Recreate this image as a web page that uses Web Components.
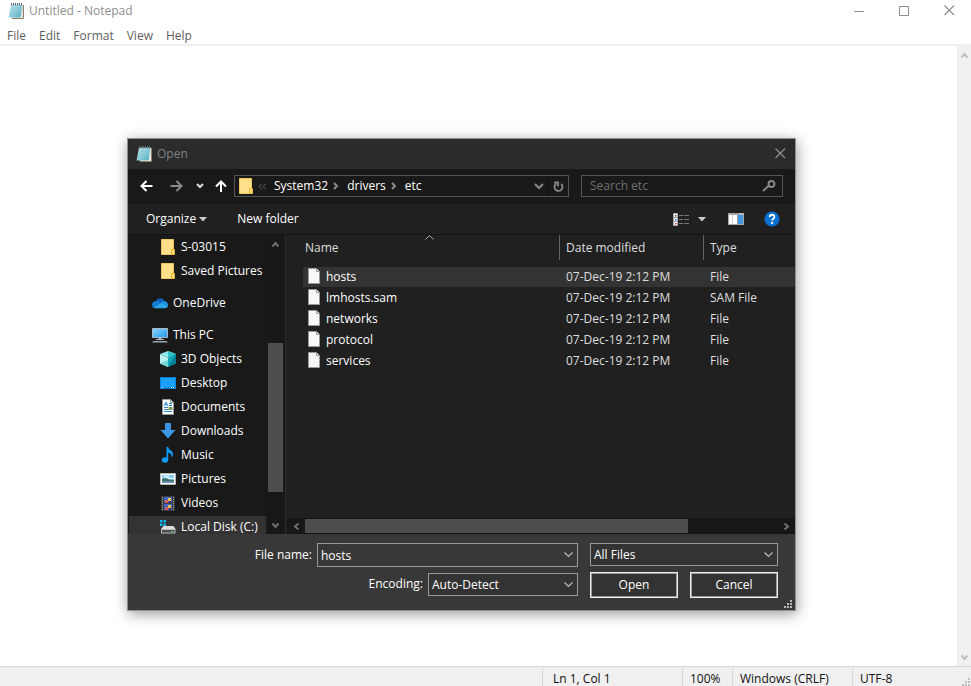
<!DOCTYPE html>
<html lang="en">
<head>
<meta charset="utf-8">
<title>Untitled - Notepad</title>
<style>
html,body{height:100%;margin:0}
body{font:12px/16px "Open Sans","Noto Sans",sans-serif;background:#fff;overflow:hidden}
</style>
</head>
<body>
<notepad-window></notepad-window>
<open-dialog></open-dialog>
<script>
const define=(name,html,setup)=>{
  const t=document.createElement('template');
  t.innerHTML='<style>*{box-sizing:border-box}button,input,select{font:inherit;color:inherit;margin:0;padding:0;border:0;background:none;border-radius:0;outline:0}a{color:inherit;text-decoration:none}</style>'+html;
  customElements.define(name,class extends HTMLElement{
    constructor(){super();this.attachShadow({mode:'open'}).append(t.content.cloneNode(true));}
    connectedCallback(){if(setup)setup(this,this.shadowRoot);}
  });
};

const line=(d,w,h,s=1,x='')=>`<svg width="${w}" height="${h}" viewBox="0 0 ${w} ${h}" fill="none" stroke="currentColor" stroke-width="${s}" ${x}><path d="${d}"/></svg>`;
const svg=(w,h,b)=>`<svg width="${w}" height="${h}" viewBox="0 0 ${w} ${h}">${b}</svg>`;
const ICONS={
  notepad:svg(16,16,`<defs><linearGradient id="n" x1="0" y1="0" x2="1" y2="1"><stop offset="0" stop-color="#c5e8ef"/><stop offset=".5" stop-color="#8fcfdd"/><stop offset="1" stop-color="#4fa9bd"/></linearGradient></defs><path d="M4 2h11.5v13.5H4z" fill="#e9e4d6"/><path d="M15.500 2v13.500H4" fill="none" stroke="#8c7f68"/><path d="M3 1.500h11.500L12.500 14.500H.5z" fill="url(#n)"/><path d="M3 5h10M2.500 7.500h10M2 10h10" stroke="#7dbccb" stroke-width=".6"/><path d="M3 14.500h10l1.500-9v9.500z" fill="#d9ecef"/><path d="M3.500 0v2.500M5.500 0v2.500M7.500 0v2.500M9.500 0v2.500M11.500 0v2.500M13.500 0v2.500" stroke="#57696e"/>`),
  min:line('M0 5.500h10',10,10),
  max:line('M.5 .5h9v9h-9z',10,10),
  close:line('M.5 .5l9.500 9.500M10 .5L.5 10',11,11,1.2),
  back:line('M12.500 6H1.500M6.500 1L1.500 6l5 5',13,12,2),
  forward:line('M.5 6h11M6.500 1l5 5-5 5',13,12,2),
  up:line('M6 12V1.500M1 6.500l5-5 5 5',12,12,2),
  small:line('M1 1l3 3 3-3',8,6,2),
  crumb:line('M1 1l3 3-3 3',6,8,2),
  crumbs:line('M4 .5L1 3.500l3 3M8 .5L5 3.500l3 3',9,7),
  drop:line('M1 1l4 4 4-4',10,7,2),
  combo:line('M.5 .5l4 4 4-4',9,6,1.2),
  sort:line('M.5 4.500l4-4 4 4',9,5),
  sup:line('M.5 5.500l3-3.500 3 3.500',7,7,2),
  sdown:line('M.5 1.500l3 3.500 3-3.500',7,7,2),
  sleft:line('M5.500 .5L2 3.500l3.500 3',7,7,2),
  sright:line('M1.500 .5L5 3.500l-3.500 3',7,7,2),
  refresh:line('M8.200 3A4 4 0 1 1 3 2.800M1.200 1.500H5V5.500',11,11,1.8),
  search:line('M7 5.500L1 11M6.500 4a3 3 0 1 0 6 0a3 3 0 1 0-6 0',12,12,2,'overflow="visible"'),
  tri:svg(8,5,`<path d="M0 0h8L4 4.500z" fill="#ccc"/>`),
  view:svg(16,13,`<path d="M.5 .5h4v12h-4z" fill="#fff" stroke="#aaa"/><path d="M.5 4.500h4M.5 8.500h4" stroke="#999"/><path d="M2 2h1.500v1.500H2z" fill="#555"/><path d="M2 6h1.500v1.500H2z" fill="#37d"/><path d="M2 10h1.500v1.500H2z" fill="#d23"/><path d="M6 2.500h4m1 0h5M6 6.500h4m1 0h5M6 10.500h4m1 0h5" stroke="#7a7a7a"/>`),
  pane:svg(16,12,`<path d="M0 0h16v12H0z" fill="#a6a6a6"/><path d="M1 2h8v9H1z" fill="#fff"/><path d="M4.500 2v9" stroke="#d0d0d0"/><path d="M10 2h5v9h-5z" fill="#3f9ae5"/><path d="M12 1h1m1 0h1" stroke="#fff"/>`),
  help:svg(16,16,`<circle cx="8" cy="8" r="7.600" fill="#0a6fd2"/><path d="M5.600 6.100C5.700 2.900 10.500 3 10.400 6c0 1.700-2.300 1.800-2.300 3.600" fill="none" stroke="#fff" stroke-width="1.800"/><path d="M7.100 10.900h2v2h-2z" fill="#fff"/>`),
  folder:svg(14,16,`<path d="M.5 .5h12v15H.5z" fill="#ffe08a" stroke="#eec75a"/><path d="M10.500 10.500h3v5h-3z" fill="#ffdb70" stroke="#e5b73f"/>`),
  cloud:svg(16,16,`<path d="M4 6a4.500 4.500 0 0 1 8-.5L14 8H3z" fill="#0b64b8"/><path d="M3.500 6.200C1.500 6.200 0 7.800 0 9.800c0 1 .5 2 1.200 2.600L9 8 6.500 6.600a4 4 0 0 0-3-.4z" fill="#1080d8"/><path d="M8 8.200l3-1.800c3-.5 5 1.200 5 3.400l-.3 1.600z" fill="#1a93e0"/><path d="M1.200 12.400C2 13 3 13.200 3.600 13.200h9c1.800 0 3-.8 3.200-2L9 8z" fill="#2aa7ec"/>`),
  pc:svg(16,16,`<defs><linearGradient id="p" x1="0" y1="0" x2="1" y2="1"><stop offset="0" stop-color="#8ed6ff"/><stop offset="1" stop-color="#1c97ee"/></linearGradient></defs><path d="M.5 1.500h15v9H.5z" fill="url(#p)" stroke="#a9bac6"/><path d="M6.500 11h3v1.500h-3z" fill="#9fb0bb"/><path d="M4 12.500h8" stroke="#b7c3cb"/><path d="M1.500 14h13l1.500 1.500H0z" fill="#9aa7b0"/>`),
  cube:svg(16,16,`<path d="M8 0l8 3-8 4-8-4z" fill="#8ee8ee"/><path d="M0 3l8 4v9l-8-3.500z" fill="#b8f1ef"/><path d="M8 7l8-4v9.500L8 16z" fill="#12a8b8"/><path d="M8 0l8 3-8 4z" fill="#35bfcb"/><path d="M0 12.500L8 9v7z" fill="#72d5d8"/><path d="M8 16l8-13v9.500z" fill="#087f95"/>`),
  desktop:svg(16,16,`<path d="M0 2h16v12H0z" fill="#0a84d8"/><path d="M1 3h14v9H1z" fill="#18a0fb"/><path d="M2 12.500h1m8 0h1m1 0h1" stroke="#fff"/>`),
  doc:svg(16,16,`<path d="M2.500 .5h8l3 3v12h-11z" fill="#fff" stroke="#9a9a9a"/><path d="M10.500 .5v3h3" fill="none" stroke="#9a9a9a"/><path d="M4 7l2-4 2 4M5 5.500h2M9 4.500h3M9 6.500h3M4 8.500h4M4 10.500h8M4 12.500h8" fill="none" stroke="#2a8ad4"/><path d="M8.500 8h4v3h-4z" fill="#7fa25f"/>`),
  down:svg(16,16,`<path d="M5 0h6v7h4.500L8 15.500 .5 7H5z" fill="#3b97e6"/>`),
  music:svg(16,16,`<ellipse cx="5" cy="13" rx="3.200" ry="2.700" fill="#0c9cf5"/><path d="M6.500 0h1.700c.3 3.200 4.800 3.500 4.800 7 0 1.600-.6 2.600-1.500 3.500C12 7.500 10 6 8.200 5.500V13H6.500z" fill="#0c9cf5"/>`),
  pics:svg(16,16,`<path d="M.5 2.500h15v11H.5z" fill="#fff" stroke="#b5b5b5"/><path d="M2 4h12v8H2z" fill="#8ecdf3"/><path d="M4 5h5v1.500H4zM8 7h6v1H8z" fill="#e8f6ff"/><path d="M2 8c3-2 5 1 12 1v1H2z" fill="#3d6d63"/><path d="M2 10h12v2H2z" fill="#5f8fb0"/>`),
  film:svg(16,16,`<path d="M1 1h14v15H1z" fill="#3b3b3b"/><path d="M2.500 2v14M13.500 2v14" stroke="#a0a0a0" stroke-dasharray="1 1"/><path d="M4 2h8v6H4zM4 9h8v6H4z" fill="#3f66c8"/><path d="M5 5h3v3H5zM5 12h3v3H5z" fill="#d8574e"/><path d="M8 3h3v3H8zM8 10h3v3H8z" fill="#e8c045"/><path d="M9 6h2v2H9zM9 13h2v2H9z" fill="#45255f"/>`),
  disk:svg(16,16,`<path d="M0 1h2.500v2.500H0zM3.500 1H6v2.500H3.500zM0 4.500h2.500V7H0zM3.500 4.500H6V7H3.500z" fill="#12b5ec"/><path d="M3.500 7h10L15.500 10H1z" fill="#dcdcdc"/><path d="M1 10h14.500v4.500H1z" fill="#b9bdc0"/><path d="M2 11h12.500v2.500H2z" fill="#4a4d50"/><path d="M11 12.500h2" stroke="#3be04b"/>`),
  file:svg(12,16,`<path d="M.5 .5h8l3 3v12H.5z" fill="#f7f7f7" stroke="#999"/><path d="M8.500 .5v3h3" fill="#ddd" stroke="#999"/>`),
  grip:svg(9,9,`<path d="M6 0h2v2H6zM3 3h2v2H3zM6 3h2v2H6zM0 6h2v2H0zM3 6h2v2H3zM6 6h2v2H6z" fill="currentColor"/>`)
};
define('ui-icon','<style>:host{display:inline-flex;flex:none;align-items:center;justify-content:center}svg{display:block}</style><span></span>',(h,r)=>{r.querySelector('span').innerHTML=ICONS[h.getAttribute('name')];});

/* Scroll bar: the thumb's place and length come from --start and --size. */
define('scroll-bar',`<style>
:host{display:flex;flex-direction:column;background:var(--track);color:var(--arrow);min-width:0;min-height:0}
:host([horizontal]){flex-direction:row}
button{display:flex;align-items:center;justify-content:center;flex:none;width:100%;height:18px}
:host([horizontal]) button{width:18px;height:100%}
.track{flex:1;display:flex;flex-direction:inherit}
.before{flex:0 0 var(--start,0%)}.thumb{flex:0 0 var(--size,0%);background:#4d4d4d}
:host([horizontal]) .track{padding:1px 0}
</style><button aria-label="Scroll back"><ui-icon></ui-icon></button><div class="track"><div class="before"></div><div class="thumb"></div></div><button aria-label="Scroll on"><ui-icon></ui-icon></button>`,(h,r)=>{
  const n=h.hasAttribute('horizontal')?['sleft','sright']:['sup','sdown'];
  r.querySelectorAll('ui-icon').forEach((i,k)=>{i.setAttribute('name',n[k]);i.shadowRoot.querySelector('span').innerHTML=ICONS[n[k]];});
});

define('app-title',`<style>
:host{display:flex;align-items:center;color:#8f8f8f}
.t{flex:1;padding-left:5px}
</style><ui-icon name="notepad"></ui-icon><span class="t"><slot></slot></span><slot name="buttons"></slot>`);

define('notepad-window',`<style>
:host{display:flex;flex-direction:column;height:100vh}
app-title{height:22px;padding:0 16px 1px 8px}
.b{display:flex;gap:35px}.b button{display:flex;color:#8f8f8f}
nav{display:flex;gap:13px;padding:6px 7px 0;height:22px;color:#606060}
.main{flex:1;display:flex;border-top:2px solid #f0f0f0;min-height:0}
textarea{flex:1;border:0;resize:none;outline:0;padding:4px;font:inherit}
scroll-bar{width:14px;--track:#f0f0f0;--arrow:#bdbdbd}
footer{display:grid;grid-template-columns:1fr 140px 50px 120px 119px;height:20px;background:#f0f0f0;border-top:1px solid #d7d7d7;color:#111;position:relative}
footer span{margin-top:1px;border-left:1px solid #d7d7d7;padding:3px 0 0 7px;white-space:nowrap}
footer span:first-child{border:0}footer span:nth-child(2){padding-left:10px}
footer ui-icon{position:absolute;right:0;bottom:-1px;color:#bdbdbd}
</style>
<app-title>Untitled - Notepad<div class="b" slot="buttons"><button aria-label="Minimize"><ui-icon name="min"></ui-icon></button><button aria-label="Maximize"><ui-icon name="max"></ui-icon></button><button aria-label="Close"><ui-icon name="close"></ui-icon></button></div></app-title>
<nav><a href="#">File</a><a href="#">Edit</a><a href="#">Format</a><a href="#">View</a><a href="#">Help</a></nav>
<div class="main"><textarea aria-label="Text editor"></textarea><scroll-bar></scroll-bar></div>
<footer><span></span><span>Ln 1, Col 1</span><span>100%</span><span>Windows (CRLF)</span><span>UTF-8</span><ui-icon name="grip"></ui-icon></footer>`);

define('address-row',`<style>
:host{display:flex;align-items:center;height:35px;background:#191919;padding:0 12px 1px;color:#fff}
button{display:flex;flex:none;justify-content:center;align-items:center}
.go{display:flex;align-items:center;width:94px}
.go button:nth-child(1){width:13px}.go button:nth-child(2){width:13px;margin-left:17px;color:#8a8a8a}
.go button:nth-child(3){margin-left:13px;width:8px;color:#ddd}.go button:nth-child(4){margin-left:10px;width:14px}
.box{height:22px;border:1px solid #555;display:flex;align-items:center;color:#8a8a8a}
.path{flex:1 1 335px;padding-left:4px;min-width:0}
.path a{color:#fff}.path .first{margin:0 7px 0 5px;color:#666}.path a+ui-icon{margin:0 8px 0 5px}
.path .dd{margin-left:auto;width:18px}.path .re{width:20px;height:20px;border-left:1px solid #111}
.search{flex:0 1 202px;margin-left:12px;padding:0 8px}
input{flex:1;min-width:0;color:#fff}input::placeholder{color:#707070;opacity:1}
</style>
<div class="go"><button aria-label="Back"><ui-icon name="back"></ui-icon></button><button aria-label="Forward"><ui-icon name="forward"></ui-icon></button><button aria-label="Recent"><ui-icon name="small"></ui-icon></button><button aria-label="Up"><ui-icon name="up"></ui-icon></button></div>
<div class="box path"><ui-icon name="folder"></ui-icon><ui-icon class="first" name="crumbs"></ui-icon><a href="#">System32</a><ui-icon name="crumb"></ui-icon><a href="#">drivers</a><ui-icon name="crumb"></ui-icon><a href="#">etc</a><button class="dd" aria-label="Previous locations"><ui-icon name="drop"></ui-icon></button><button class="re" aria-label="Refresh"><ui-icon name="refresh"></ui-icon></button></div>
<div class="box search"><input type="search" placeholder="Search etc" aria-label="Search etc"><ui-icon name="search"></ui-icon></div>`);

define('tool-row',`<style>
:host{display:flex;align-items:center;height:31px;background:#202020;border-bottom:1px solid #141414;color:#fff;padding:0 15px 0 18px}
button{display:flex;align-items:center;gap:3px}
.new{margin:0 auto 0 30px}.view{gap:9px;margin-right:22px}.pane{margin-right:20px}
</style><button>Organize<ui-icon name="tri"></ui-icon></button><button class="new">New folder</button><button class="view" aria-label="Change view"><ui-icon name="view"></ui-icon><ui-icon name="tri"></ui-icon></button><button class="pane" aria-label="Preview pane"><ui-icon name="pane"></ui-icon></button><button aria-label="Help"><ui-icon name="help"></ui-icon></button>`);

define('tree-item',`<style>
:host{display:block}
:host([gap]){margin-top:8px}
a{display:flex;align-items:center;gap:5px;height:24px;padding-left:23px;white-space:nowrap}
:host([deep]) a{padding-left:31px}
:host([current]) a{background:#333;margin-top:1px;height:22px}
ui-icon{width:16px}
</style><a href="#"><ui-icon></ui-icon><slot></slot></a>`,(h,r)=>{r.querySelector('ui-icon').shadowRoot.querySelector('span').innerHTML=ICONS[h.getAttribute('icon')];r.querySelector('ui-icon').setAttribute('name',h.getAttribute('icon'));});

define('folder-tree',`<style>
:host{display:flex;width:158px;flex:none;background:#191919;color:#fff;overflow:hidden;border-right:1px solid #2b2b2b;padding:0 2px 0 1px}
nav{flex:1;overflow:hidden;min-width:0}
scroll-bar{width:15px;margin-left:2px;--track:#171717;--arrow:#707070;--start:34.2%;--size:56.6%}
</style><nav aria-label="Folders">
<tree-item deep icon="folder">S-03015</tree-item><tree-item deep icon="folder">Saved Pictures</tree-item>
<tree-item gap icon="cloud">OneDrive</tree-item><tree-item gap icon="pc">This PC</tree-item>
<tree-item deep icon="cube">3D Objects</tree-item><tree-item deep icon="desktop">Desktop</tree-item><tree-item deep icon="doc">Documents</tree-item><tree-item deep icon="down">Downloads</tree-item><tree-item deep icon="music">Music</tree-item><tree-item deep icon="pics">Pictures</tree-item><tree-item deep icon="film">Videos</tree-item><tree-item deep current icon="disk">Local Disk (C:)</tree-item>
</nav><scroll-bar></scroll-bar>`);

define('file-list',`<style>
:host{display:flex;flex-direction:column;flex:1;min-width:0;background:#202020;color:#fff;position:relative}
.w{flex:1;min-height:0;overflow:hidden;padding-left:17px}
table{width:100%;table-layout:fixed;border-collapse:separate;border-spacing:0}
th{font-weight:400;text-align:left;height:25px;padding:0 0 0 6px;border-left:1px solid #636363;color:#dedede}
th:first-child{border:0;padding-left:2px}
.d{width:144px}.t{width:92px}
tbody::before{content:"";display:block;height:7px}
td{height:21px;padding:0 0 0 7px;border-bottom:1px solid transparent;background-clip:padding-box;color:#dedede;white-space:nowrap}
td:first-child{padding-left:5px;color:#fff}
td:first-child>span{display:flex;align-items:center;gap:6px;height:20px}
td ui-icon{height:18px;align-items:flex-start}
.sel td{background-color:#333}
.sort{position:absolute;top:0;left:139px;color:#aaa}
scroll-bar{height:16px;margin-left:1px;--track:#171717;--arrow:#707070;--size:81.1%}
</style><div class="w"><table><thead><tr><th>Name</th><th class="d">Date modified</th><th class="t">Type</th></tr></thead><tbody></tbody></table></div><ui-icon class="sort" name="sort"></ui-icon><scroll-bar horizontal></scroll-bar>`,(h,r)=>{
  r.querySelector('tbody').innerHTML=['hosts','lmhosts.sam','networks','protocol','services'].map((n,i)=>`<tr${i?'':' class="sel"'}><td><span><ui-icon name="file"></ui-icon>${n}</span></td><td>07-Dec-19 2:12 PM</td><td>${i==1?'SAM File':'File'}</td></tr>`).join('');
});

define('dialog-form',`<style>
:host{display:block;background:#383838;color:#fff;height:76px;padding:9px 17px 0 0;position:relative}
form{display:grid;grid-template-columns:1fr 188px;column-gap:12px;row-gap:5px}
.l{display:flex;justify-content:flex-end;align-items:center;gap:5px;height:24px}
.f{position:relative;display:flex;border:1px solid #999;height:24px;background:#383838}
.f.s{height:23px;background:#333}
.name{width:261px}.enc{width:150px}
.f input,.f select{width:100%;appearance:none;padding:0 20px 0 3px;min-width:0}
.f input,.f.enc select{padding-top:2px}
.f ui-icon{position:absolute;right:4px;top:8px;color:#bbb;pointer-events:none}
.btns{display:grid;grid-template-columns:1fr 1fr;gap:12px}
.btns button{height:26px;border:1px solid #f0f0f0;background:#333;box-shadow:inset 0 0 0 1px #999}
.grip{position:absolute;right:2px;bottom:1px;color:#bbb}
</style><form onsubmit="return false">
<div class="l"><label for="n">File name:</label><div class="f name"><input id="n" value="hosts"><ui-icon name="combo"></ui-icon></div></div>
<div class="f s"><select aria-label="File type"><option>All Files</option></select><ui-icon name="combo"></ui-icon></div>
<div class="l"><label for="e">Encoding:</label><div class="f s enc"><select id="e"><option>Auto-Detect</option></select><ui-icon name="combo"></ui-icon></div></div>
<div class="btns"><button>Open</button><button type="button">Cancel</button></div>
</form><ui-icon class="grip" name="grip"></ui-icon>`);

define('open-dialog',`<style>
:host{position:absolute;inset:138px 175px 75px 127px;display:flex;flex-direction:column;border:1px solid #8f8f8f;background:#202020;box-shadow:1px 3px 13px rgba(0,0,0,.4)}
app-title{height:30px;background:#2b2b2b;padding:0 9px 1px 8px;color:#808080}
app-title button{display:flex;color:#8f8f8f}
.body{flex:1;display:flex;min-height:0}
</style><app-title>Open<button slot="buttons" aria-label="Close"><ui-icon name="close"></ui-icon></button></app-title>
<address-row></address-row><tool-row></tool-row><div class="body"><folder-tree></folder-tree><file-list></file-list></div><dialog-form></dialog-form>`);
</script>
</body>
</html>
